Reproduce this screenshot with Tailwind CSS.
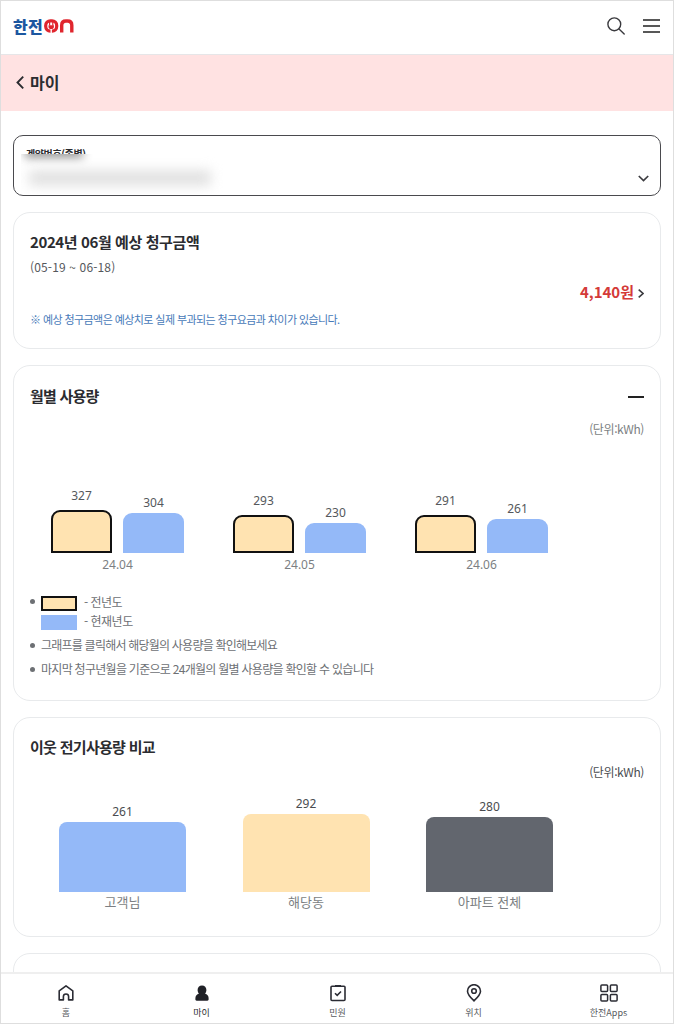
<!DOCTYPE html>
<html lang="ko">
<head>
  <meta charset="UTF-8">
  <meta name="viewport" content="width=device-width, initial-scale=1.0">
  <title>한전ON 마이</title>
  <script src="https://cdn.jsdelivr.net/npm/@tailwindcss/browser@4"></script>
</head>
<body class="bg-white font-['Noto_Sans_CJK_KR',sans-serif] text-[#2b2c30]">
  <div class="flex h-screen flex-col overflow-hidden border border-[#dedede] whitespace-nowrap">

    <!-- Header -->
    <header class="flex h-[54px] shrink-0 items-center justify-between border-b border-[#e6e6e8] pr-[13px] pb-[3px] pl-3">
      <div class="flex items-center gap-px pb-px">
        <span class="text-[16px] leading-5 font-black tracking-[0.4px] text-[#1c57a0]">한전</span>
        <svg class="h-[14px] w-[30px]" viewBox="0 0 30 14" fill="none">
          <rect x="1.700" y="1.800" width="11" height="10.400" rx="4.600" stroke="#e0262e" stroke-width="3.200" />
          <path d="M5.600 3v3.500M8.800 3v3.500" stroke="#e0262e" stroke-width="1.200" />
          <path d="M4.500 6.200h5.400v1.200a2.700 2.700 0 0 1-5.400 0z" fill="#e0262e" />
          <path d="M7.200 10v4" stroke="#fff" stroke-width="1.400" />
          <path d="M17.700 13.600V6.200c0-2.600 1.600-4.200 4.200-4.200h1.700c2.600 0 4.200 1.600 4.200 4.200v7.400" stroke="#e0262e" stroke-width="3.400" />
        </svg>
      </div>
      <div class="flex items-center gap-[18px]">
        <svg class="size-[18px]" viewBox="0 0 18 18" fill="none" stroke="#3a3a3e" stroke-width="1.400" stroke-linecap="round">
          <circle cx="7.300" cy="7.300" r="6.400" />
          <path d="M12 12l5.200 5" />
        </svg>
        <svg class="h-[14px] w-[17px]" viewBox="0 0 17 14" fill="none" stroke="#222" stroke-width="1.600">
          <path d="M0 1h17M0 7h17M0 13h17" />
        </svg>
      </div>
    </header>

    <!-- Page title -->
    <div class="flex h-14 shrink-0 items-center gap-[6px] bg-[#ffe2e2] pb-[2px] pl-[15px]">
      <svg class="h-[13px] w-2" viewBox="0 0 8 13" fill="none" stroke="#2b2c30" stroke-width="1.900">
        <path d="M7.200.7L1.500 6.500l5.700 5.800" />
      </svg>
      <h1 class="text-[16px] leading-5 font-bold">마이</h1>
    </div>

    <main class="flex min-h-0 flex-1 flex-col gap-4 overflow-hidden px-3 pt-6">

      <!-- Contract selector -->
      <section class="relative h-[61px] shrink-0 rounded-[10px] border border-[#4a4a4e] pt-3 pl-3">
        <p class="text-[10px] leading-3 font-bold tracking-[-0.4px]">계약번호(종별)</p>
        <div class="absolute top-[18px] left-[7px] h-10 w-[220px] overflow-hidden bg-white">
          <div class="absolute -top-2 left-1 h-3 w-[58px] bg-[#999] blur-[5px]"></div>
          <div class="absolute top-[16px] left-2 h-4 w-[182px] bg-[#e2e2e2] blur-[6px]"></div>
        </div>
        <svg class="absolute top-[39px] right-[11px] h-[7px] w-[11px]" viewBox="0 0 11 7" fill="none" stroke="#3c3c40" stroke-width="1.700">
          <path d="M.8 1l4.700 4.600L10.200 1" />
        </svg>
      </section>

      <!-- Estimated bill -->
      <section class="h-[137px] shrink-0 rounded-[17px] border border-[#e8eaec] pt-[19px] pr-4 pl-4">
        <h2 class="text-[15px] leading-5 font-bold tracking-[-0.4px]">2024년 06월 예상 청구금액</h2>
        <p class="mt-[5px] text-[12px] leading-5 tracking-[0.15px] text-[#55585c]">(05-19 ~ 06-18)</p>
        <div class="mt-[5px] flex items-center justify-end gap-1">
          <strong class="text-[15px] leading-5 font-bold text-[#d43a38]">4,140원</strong>
          <svg class="mt-[3px] h-[9px] w-[6px]" viewBox="0 0 6 9" fill="none" stroke="#3c3c40" stroke-width="1.600">
            <path d="M.7.600l4.300 3.900L.7 8.400" />
          </svg>
        </div>
        <p class="mt-[7px] text-[11px] leading-5 tracking-[-0.58px] text-[#477ab9]">※ 예상 청구금액은 예상치로 실제 부과되는 청구요금과 차이가 있습니다.</p>
      </section>

      <!-- Monthly usage -->
      <section class="h-[336px] shrink-0 rounded-[17px] border border-[#e8eaec] pt-5 pr-4 pl-4">
        <div class="flex items-center justify-between">
          <h2 class="text-[15px] leading-5 font-bold tracking-[-0.8px]">월별 사용량</h2>
          <span class="mt-px h-0.5 w-4 bg-[#222]"></span>
        </div>
        <p class="mt-[13px] text-right text-[12px] leading-5 tracking-[-0.4px] text-[#7c7f83]">(단위:kWh)</p>

        <div class="mt-12 flex gap-[49px] pl-[21px] font-['Noto_Sans',sans-serif] text-[12px] leading-4">
          <div class="w-[133px]">
            <div class="flex h-[66px] items-end justify-between text-center text-[#55585c]">
              <div class="w-[61px]">327<div class="mt-[6px] h-[43px] rounded-t-[9px] border-2 border-[#111] bg-[#ffe3b1]"></div></div>
              <div class="w-[61px]">304<div class="mt-[2px] h-10 rounded-t-[9px] bg-[#94b9f8]"></div></div>
            </div>
            <p class="mt-1 text-center text-[#7c7f83]">24.04</p>
          </div>
          <div class="w-[133px]">
            <div class="flex h-[66px] items-end justify-between text-center text-[#55585c]">
              <div class="w-[61px]">293<div class="mt-[6px] h-[38px] rounded-t-[9px] border-2 border-[#111] bg-[#ffe3b1]"></div></div>
              <div class="w-[61px]">230<div class="mt-[2px] h-[30px] rounded-t-[9px] bg-[#94b9f8]"></div></div>
            </div>
            <p class="mt-1 text-center text-[#7c7f83]">24.05</p>
          </div>
          <div class="w-[133px]">
            <div class="flex h-[66px] items-end justify-between text-center text-[#55585c]">
              <div class="w-[61px]">291<div class="mt-[6px] h-[38px] rounded-t-[9px] border-2 border-[#111] bg-[#ffe3b1]"></div></div>
              <div class="w-[61px]">261<div class="mt-[2px] h-[34px] rounded-t-[9px] bg-[#94b9f8]"></div></div>
            </div>
            <p class="mt-1 text-center text-[#7c7f83]">24.06</p>
          </div>
        </div>

        <ul class="mt-[19px] text-[12px] tracking-[-0.78px] text-[#6d7074]">
          <li class="flex items-start">
            <span class="mt-[7px] mr-[6px] size-[5px] rounded-full bg-[#6d7074]"></span>
            <div>
              <div class="flex h-[19px] items-center gap-[7px] tracking-[-0.5px]"><span class="mt-[3px] h-[15px] w-9 border-2 border-[#111] bg-[#ffe3b1]"></span>- 전년도</div>
              <div class="flex h-[19px] items-center gap-[7px] tracking-[-0.5px]"><span class="mt-[3px] h-[15px] w-9 bg-[#94b9f8]"></span>- 현재년도</div>
            </div>
          </li>
          <li class="mt-[5px] flex h-5 items-center gap-[6px]"><span class="size-[5px] rounded-full bg-[#6d7074]"></span>그래프를 클릭해서 해당월의 사용량을 확인해보세요</li>
          <li class="mt-1 flex h-5 items-center gap-[6px] tracking-[-0.72px]"><span class="size-[5px] rounded-full bg-[#6d7074]"></span>마지막 청구년월을 기준으로 24개월의 월별 사용량을 확인할 수 있습니다</li>
        </ul>
      </section>

      <!-- Neighbour comparison -->
      <section class="h-[220px] shrink-0 rounded-[17px] border border-[#e8eaec] pt-[19px] pr-4 pl-4">
        <h2 class="text-[15px] leading-5 font-bold tracking-[-0.7px]">이웃 전기사용량 비교</h2>
        <p class="mt-[5px] text-right text-[12px] leading-5 tracking-[-0.4px] text-[#4a4c50]">(단위:kWh)</p>
        <div class="mt-[13px] flex h-[97px] items-end gap-[56.5px] pl-[29px] text-center font-['Noto_Sans',sans-serif] text-[12px] leading-4 text-[#4a4c50]">
          <div class="w-[127px]">261<div class="mt-[2px] h-[70px] rounded-t-[8px] bg-[#94b9f8]"></div></div>
          <div class="w-[127px]">292<div class="mt-[2px] h-[78px] rounded-t-[8px] bg-[#ffe3b1]"></div></div>
          <div class="w-[127px]">280<div class="mt-[2px] h-[75px] rounded-t-[8px] bg-[#62666e]"></div></div>
        </div>
        <div class="flex gap-[56.5px] pl-[29px] text-center text-[13px] leading-5 text-[#7c7f83]">
          <p class="w-[127px]">고객님</p>
          <p class="w-[127px]">해당동</p>
          <p class="w-[127px]">아파트 전체</p>
        </div>
      </section>

      <section class="h-[120px] shrink-0 rounded-[17px] border border-[#e8eaec]"></section>
    </main>

    <!-- Bottom navigation -->
    <nav class="flex h-[51px] shrink-0 border-t-2 border-[#efefef] bg-white text-center text-[9px] leading-3 text-[#55585c]">
      <a class="flex w-[130px] flex-col items-center gap-[5px] pt-[10px]">
        <svg class="size-[18px]" viewBox="0 0 18 18" fill="none" stroke="#2b2c34" stroke-width="1.600" stroke-linejoin="round">
          <path d="M2.200 6.800L9 1.800l6.800 5v9.100h-4.200v-3.300a2.600 2.600 0 0 0-5.200 0v3.300H2.200z" />
        </svg>
        홈
      </a>
      <a class="flex w-[141px] flex-col items-center gap-[5px] pt-[10px] text-[#2b2c30]">
        <svg class="size-[18px]" viewBox="0 0 18 18" fill="#202127">
          <path d="M9 1.500c2.700 0 4.400 2 4.400 4.400 0 1.500-.6 2.800-1.300 3.900 2 .5 3.500 2 3.500 4.300v1.400c0 .7-.5 1.200-1.200 1.200H3.600c-.7 0-1.200-.5-1.200-1.200v-1.400c0-2.300 1.500-3.800 3.500-4.300-.7-1.100-1.300-2.400-1.300-3.900 0-2.400 1.700-4.400 4.400-4.400z" />
        </svg>
        마이
      </a>
      <a class="flex w-[131px] flex-col items-center gap-[5px] pt-[10px]">
        <svg class="size-[18px]" viewBox="0 0 18 18" fill="none" stroke="#2b2c34" stroke-width="1.600">
          <rect x="2" y="2.300" width="14" height="14.200" rx="1" />
          <path d="M6 1.800h6M6 9.200l2.200 2.200L12 7.500" />
        </svg>
        민원
      </a>
      <a class="flex w-[141px] flex-col items-center gap-[5px] pt-[10px]">
        <svg class="size-[18px]" viewBox="0 0 18 18" fill="none" stroke="#2b2c34" stroke-width="1.600">
          <path d="M9 16.800C6 14 2.500 10.800 2.500 7.200a6.500 6.500 0 0 1 13 0c0 3.600-3.500 6.800-6.500 9.600z" />
          <circle cx="9" cy="7" r="2.300" />
        </svg>
        위치
      </a>
      <a class="flex w-[129px] flex-col items-center gap-[5px] pt-[10px]">
        <svg class="size-[18px]" viewBox="0 0 18 18" fill="none" stroke="#2b2c34" stroke-width="1.500">
          <rect x=".9" y=".9" width="6.700" height="6.700" rx="1" />
          <rect x="10.400" y=".9" width="6.700" height="6.700" rx="1" />
          <rect x=".9" y="10.400" width="6.700" height="6.700" rx="1" />
          <rect x="10.400" y="10.400" width="6.700" height="6.700" rx="1" />
        </svg>
        한전Apps
      </a>
    </nav>
  </div>
</body>
</html>
